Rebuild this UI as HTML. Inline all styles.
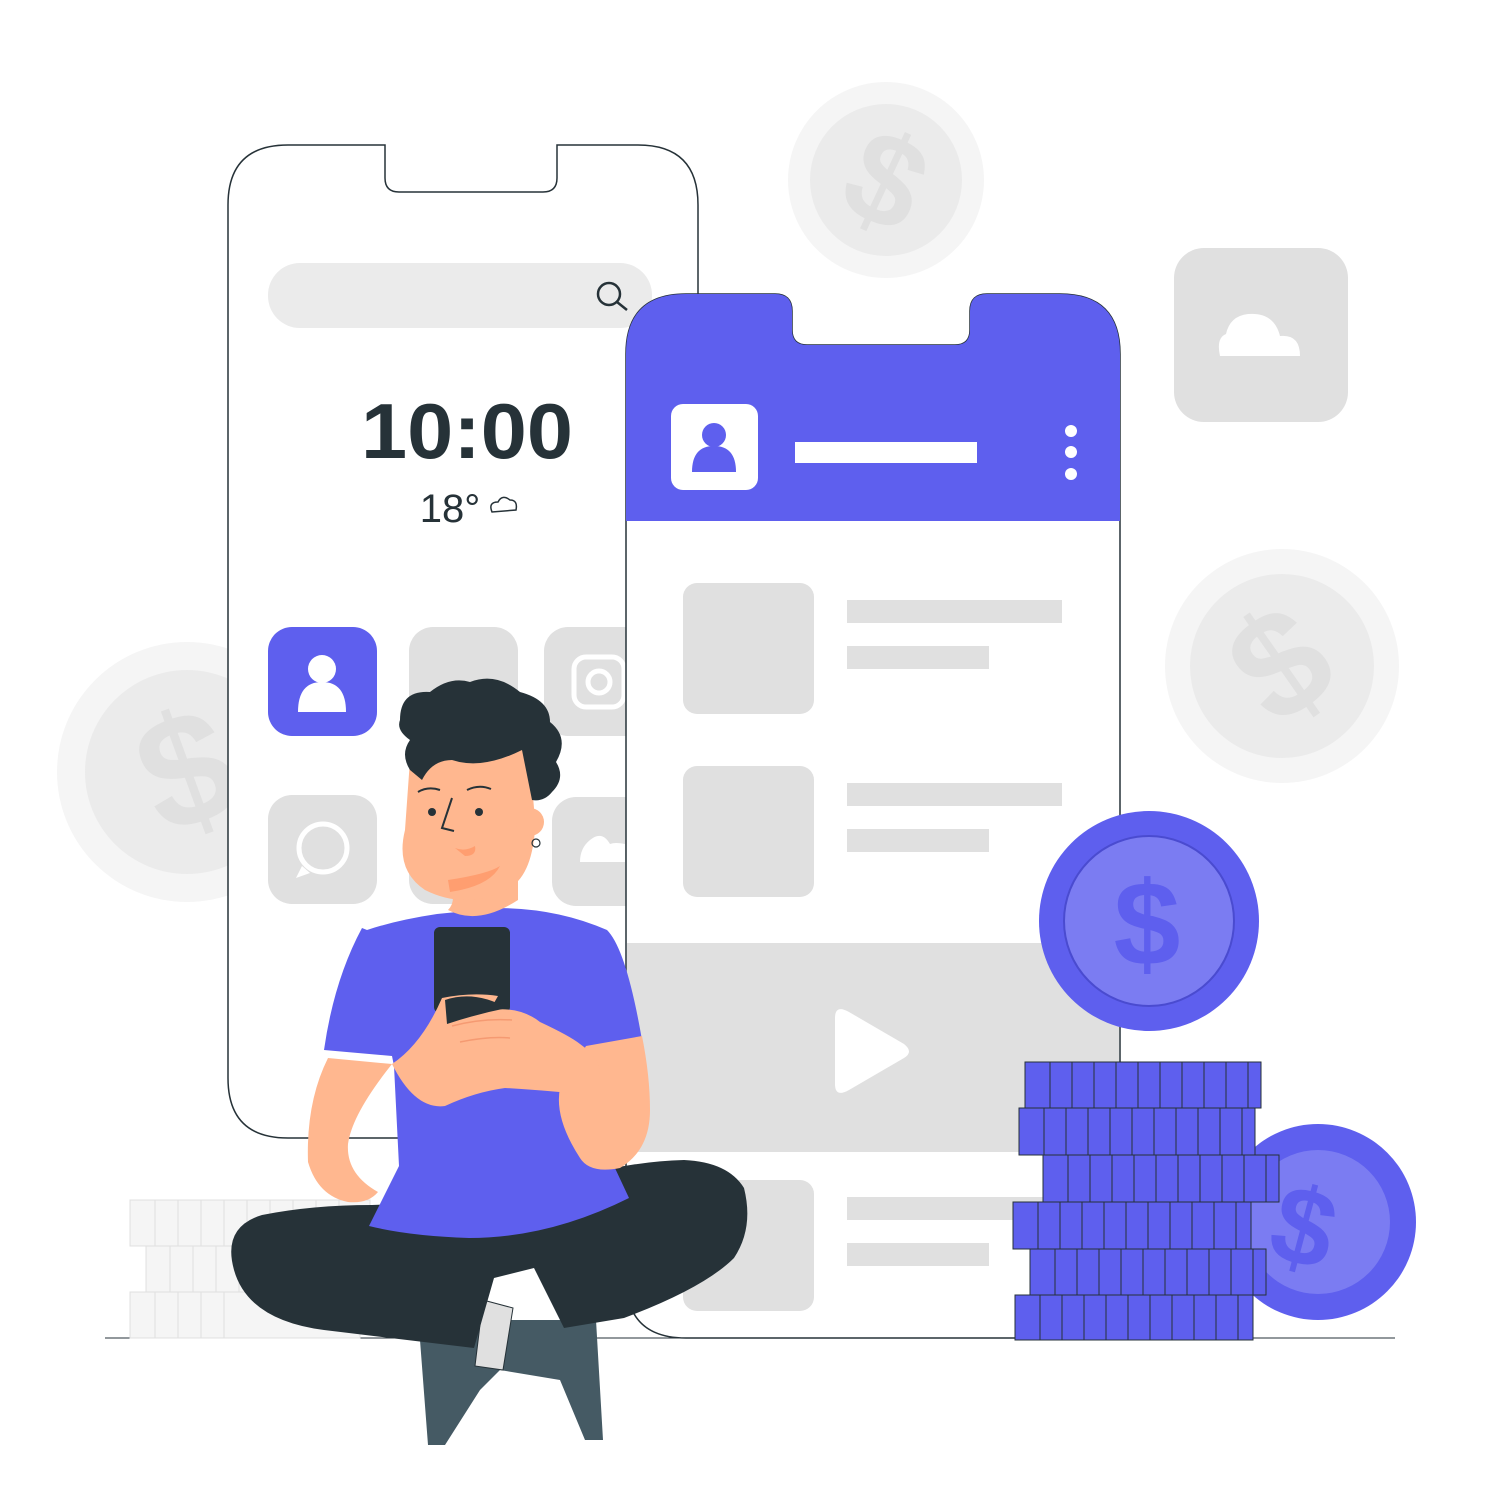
<!DOCTYPE html>
<html><head><meta charset="utf-8"><style>html,body{margin:0;padding:0;background:#fff}svg{display:block}</style></head><body>
<svg width="1500" height="1500" viewBox="0 0 1500 1500" xmlns="http://www.w3.org/2000/svg">
<g fill="#f5f5f5"><circle cx="886" cy="180" r="98"/><circle cx="1282" cy="666" r="117"/><circle cx="187" cy="772" r="130"/></g>
<g fill="#ebebeb"><circle cx="886" cy="180" r="76"/><circle cx="1282" cy="666" r="92"/><circle cx="187" cy="772" r="102"/></g>
<g fill="#e0e0e0" font-family="Liberation Sans, sans-serif" font-weight="bold" text-anchor="middle">
<text x="886" y="225" font-size="130" transform="rotate(25 886 180)">$</text>
<text x="1282" y="715" font-size="150" transform="rotate(-35 1282 666)">$</text>
<text x="187" y="825" font-size="160" transform="rotate(-20 187 772)">$</text>
</g>
<rect x="1174" y="248" width="174" height="174" rx="30" fill="#e0e0e0"/>
<path d="M1220 356 h80 q0-22-20-20 q-6-24-32-22 q-18 2-22 20 q-10 4-6 22z" fill="#fff"/>
<line x1="105" y1="1338" x2="1395" y2="1338" stroke="#263238" stroke-width="1"/>
<g fill="#f5f5f5" stroke="#e0e0e0"><rect x="130" y="1200" width="240" height="46"/><rect x="146" y="1246" width="220" height="46"/><rect x="130" y="1292" width="230" height="46"/></g>
<g stroke="#e0e0e0"><path d="M155 1200v46M178 1200v46M201 1200v46M224 1200v46M247 1200v46M270 1200v46M293 1200v46M316 1200v46M339 1200v46M170 1246v46M193 1246v46M216 1246v46M239 1246v46M155 1292v46M178 1292v46M201 1292v46M224 1292v46"/></g>
<path d="M288 145 H385 V178 q0 14 14 14 H543 q14 0 14-14 V145 H638 q60 0 60 60 V1080 q0 58-58 58 H288 q-60 0-60-60 V205 q0-60 60-60z" fill="#fff" stroke="#263238" stroke-width="1.5"/>
<rect x="268" y="263" width="384" height="65" rx="32" fill="#ebebeb"/>
<circle cx="609" cy="294" r="11" fill="none" stroke="#263238" stroke-width="2.5"/><line x1="617" y1="302" x2="627" y2="310" stroke="#263238" stroke-width="2.5"/>
<text x="467" y="458" font-family="Liberation Sans, sans-serif" font-weight="bold" font-size="78" fill="#263238" text-anchor="middle" textLength="212" lengthAdjust="spacingAndGlyphs">10:00</text>
<text x="450" y="522" font-family="Liberation Sans, sans-serif" font-size="40" fill="#263238" text-anchor="middle">18°</text>
<path d="M492 512 q-4-10 6-10 q4-8 12-2 q8 0 6 10z" fill="none" stroke="#263238" stroke-width="1.5"/>
<rect x="268" y="627" width="109" height="109" rx="24" fill="#5e5fee"/>
<circle cx="322" cy="669" r="14" fill="#fff"/><path d="M298 712 q0-30 24-30 q24 0 24 30z" fill="#fff"/>
<rect x="409" y="627" width="109" height="109" rx="24" fill="#e0e0e0"/>
<rect x="544" y="627" width="109" height="109" rx="24" fill="#e0e0e0"/>
<rect x="574" y="657" width="50" height="50" rx="12" fill="none" stroke="#fff" stroke-width="5"/><circle cx="599" cy="682" r="11" fill="none" stroke="#fff" stroke-width="5"/>
<rect x="268" y="795" width="109" height="109" rx="24" fill="#e0e0e0"/>
<circle cx="323" cy="848" r="24" fill="none" stroke="#fff" stroke-width="5"/><path d="M302 866 l-6 12 l14-5" fill="#fff"/>
<rect x="409" y="795" width="109" height="109" rx="24" fill="#e0e0e0"/>
<rect x="552" y="797" width="109" height="109" rx="24" fill="#e0e0e0"/>
<path d="M580 862 h45 v-18 q-10-2-15 0 q-8-14-20-4 q-10 8-10 22z" fill="#fff"/>
<path d="M686 294 H775 q17 0 17 17 V330 q0 15 15 15 H955 q15 0 15-15 V311 q0-17 17-17 H1060 q60 0 60 60 V1280 q0 58-58 58 H686 q-60 0-60-60 V354 q0-60 60-60z" fill="#fff" stroke="#263238" stroke-width="1.5"/>
<path d="M686 294 H775 q17 0 17 17 V330 q0 15 15 15 H955 q15 0 15-15 V311 q0-17 17-17 H1060 q60 0 60 60 V521 H626 V354 q0-60 60-60z" fill="#5e5fee"/>
<rect x="671" y="404" width="87" height="86" rx="12" fill="#fff"/>
<circle cx="714" cy="435" r="12" fill="#5e5fee"/><path d="M692 472 q0-26 22-26 q22 0 22 26z" fill="#5e5fee"/>
<rect x="795" y="442" width="182" height="21" fill="#fff"/>
<g fill="#fff"><circle cx="1071" cy="431" r="6"/><circle cx="1071" cy="452" r="6"/><circle cx="1071" cy="474" r="6"/></g>
<g fill="#e0e0e0">
<rect x="683" y="583" width="131" height="131" rx="14"/><rect x="847" y="600" width="215" height="23"/><rect x="847" y="646" width="142" height="23"/>
<rect x="683" y="766" width="131" height="131" rx="14"/><rect x="847" y="783" width="215" height="23"/><rect x="847" y="829" width="142" height="23"/>
<rect x="627" y="943" width="492" height="209"/>
<rect x="683" y="1180" width="131" height="131" rx="14"/><rect x="847" y="1197" width="215" height="23"/><rect x="847" y="1243" width="142" height="23"/>
</g>
<path d="M835 1018 q0-14 14-6 l55 32 q10 8 0 14 l-55 32 q-14 8-14-6z" fill="#fff"/>
<circle cx="1318" cy="1222" r="98" fill="#5e5fee"/><circle cx="1318" cy="1222" r="72" fill="#7b7cf2"/>
<text x="1305" y="1265" font-family="Liberation Sans, sans-serif" font-weight="bold" font-size="110" fill="#5e5fee" text-anchor="middle" transform="rotate(15 1305 1222)">$</text>
<circle cx="1149" cy="921" r="110" fill="#5e5fee"/><circle cx="1149" cy="921" r="85" fill="#7b7cf2" stroke="#4a4bd0" stroke-width="2"/>
<text x="1147" y="965" font-family="Liberation Sans, sans-serif" font-weight="bold" font-size="120" fill="#5e5fee" text-anchor="middle">$</text>
<g fill="#5e5fee" stroke="#263238" stroke-width="1">
<rect x="1025" y="1062" width="236" height="46"/><rect x="1019" y="1108" width="236" height="47"/><rect x="1043" y="1155" width="236" height="47"/><rect x="1013" y="1202" width="238" height="47"/><rect x="1030" y="1249" width="236" height="46"/><rect x="1015" y="1295" width="238" height="45"/>
</g>
<g stroke="#263238" stroke-width="1">
<path d="M1050 1062v46M1072 1062v46M1094 1062v46M1116 1062v46M1138 1062v46M1160 1062v46M1182 1062v46M1204 1062v46M1226 1062v46M1248 1062v46"/>
<path d="M1044 1108v47M1066 1108v47M1088 1108v47M1110 1108v47M1132 1108v47M1154 1108v47M1176 1108v47M1198 1108v47M1220 1108v47M1242 1108v47"/>
<path d="M1068 1155v47M1090 1155v47M1112 1155v47M1134 1155v47M1156 1155v47M1178 1155v47M1200 1155v47M1222 1155v47M1244 1155v47M1266 1155v47"/>
<path d="M1038 1202v47M1060 1202v47M1082 1202v47M1104 1202v47M1126 1202v47M1148 1202v47M1170 1202v47M1192 1202v47M1214 1202v47M1236 1202v47"/>
<path d="M1055 1249v46M1077 1249v46M1099 1249v46M1121 1249v46M1143 1249v46M1165 1249v46M1187 1249v46M1209 1249v46M1231 1249v46M1253 1249v46"/>
<path d="M1040 1295v45M1062 1295v45M1084 1295v45M1106 1295v45M1128 1295v45M1150 1295v45M1172 1295v45M1194 1295v45M1216 1295v45M1238 1295v45"/>
</g>
<!-- person -->
<path d="M420 1340 L428 1445 L445 1445 L480 1390 L500 1370 L560 1380 L585 1440 L603 1440 L596 1320 L470 1320z" fill="#455a64"/>
<path d="M483 1300 l30 8 l-10 62 l-28-4z" fill="#e0e0e0" stroke="#263238" stroke-width="1"/>
<path d="M372 1205 q-60 0-110 10 q-40 12-28 55 q14 50 90 60 l150 18 l20-70 l40-10 l30 60 l60-10 q80-30 110-60 q20-30 10-70 q-16-26-60-28 q-80 2-180 40z" fill="#263238"/>
<path d="M367 930 q30-10 70-16 l60-6 q60 0 110 22 q20 20 36 116 l-56 10 l12 30 q-20 40 15 80 l15 32 q-80 40-160 40 q-60-2-100-12 l30-60 l-5-100 l-2-10 l-68-6 q10-70 38-122z" fill="#5e5fee"/>
<path d="M328 1058 l64 6 q-40 50-44 80 q-2 30 30 48 q-10 12-30 10 q-30-6-40-40 q-2-60 20-104z" fill="#ffb78f"/>
<path d="M586 1046 l56-10 q8 40 8 74 q0 40-30 58 q-30 6-40-10 q-26-40-20-70z" fill="#ffb78f"/>
<rect x="434" y="927" width="76" height="86" rx="6" fill="#263238"/>
<path d="M392 1064 q30-20 50-66 q30-6 56-2 l-8 14 q30-4 50 12 q30 14 40 22 q20 14 20 30 l-20 20 q-40-4-75-6 q-30 4-60 18 q-30 4-53-42z" fill="#ffb78f"/>
<path d="M445 1000 q30-10 62 8 q-30 6-60 16z" fill="#263238"/>
<path d="M452 1026 q30-8 60-6 M460 1042 q30-6 50-4" stroke="#f59a72" stroke-width="1.5" fill="none"/>
<path d="M448 880 q10 20 0 30 q30 16 70-10 l0-40z" fill="#ffb78f"/>
<path d="M410 760 q50-40 115-20 q10 60 10 90 q-4 50-30 60 q-40 20-80 0 q-30-20-20-60z" fill="#ffb78f"/>
<path d="M448 880 q40-6 52-14 q-10 20-50 26z" fill="#ff9e70"/>
<circle cx="530" cy="822" r="14" fill="#ffb78f"/>
<circle cx="536" cy="843" r="4" fill="none" stroke="#263238" stroke-width="1.2"/>
<path d="M400 720 q0-30 30-28 q20-16 40-10 q26-10 50 10 q30 8 30 30 q20 16 6 40 q10 16-4 30 q-8 10-20 8 l-10-50 q-40 20-70 10 q-20 0-30 20 l-12-10 q-10-16 0-30 q-14-10-10-20z" fill="#263238"/>
<circle cx="432" cy="812" r="4" fill="#263238"/><circle cx="479" cy="812" r="4" fill="#263238"/>
<path d="M418 792 q10-6 22-2 M467 790 q12-6 24-1 M452 798 l-10 30 l12 3" fill="none" stroke="#263238" stroke-width="2"/>
<path d="M455 848 q10 4 20-2 q2 10-10 10z" fill="#ff9e70"/>
</svg>
</body></html>
